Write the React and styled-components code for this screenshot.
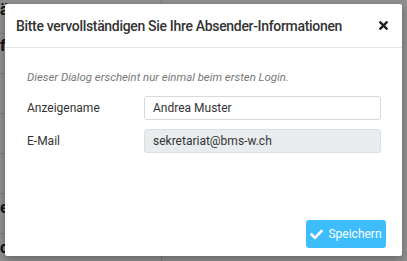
import styled, { createGlobalStyle } from "styled-components";
import { FaCheck, FaTimes } from "react-icons/fa";

const GlobalStyle = createGlobalStyle`
  html, body {
    margin: 0;
    padding: 0;
  }
  body {
    font-family: Roboto, "Liberation Sans", sans-serif;
    color: #333;
    overflow: hidden;
  }
`;

const Page = styled.div`
  position: relative;
  width: 407px;
  height: 261px;
  display: grid;
  grid-template-columns: 162px 1fr;
  background: #fff;
  overflow: hidden;
`;

const Sidebar = styled.div`
  border-right: 1px solid #ddd;
  display: flex;
  flex-direction: column;
`;

const SideRow = styled.div`
  height: ${(p) => p.$h || 40}px;
  flex-shrink: 0;
  border-bottom: 1px solid #e4e4e4;
  font-size: 16px;
  font-weight: 700;
  color: #222;
  padding-top: ${(p) => p.$pad || 0}px;
  box-sizing: border-box;
`;

const Backdrop = styled.div`
  position: absolute;
  inset: 0;
  background: rgba(0, 0, 0, 0.44);
  display: flex;
  align-items: flex-start;
  padding: 4px 5px;
`;

const Dialog = styled.div`
  width: 397px;
  height: 252px;
  background: #fff;
  border-radius: 2px;
  display: flex;
  flex-direction: column;
  box-shadow: 0 3px 9px rgba(0, 0, 0, 0.3);
`;

const Header = styled.div`
  height: 43px;
  border-bottom: 1px solid #e5e5e5;
  display: flex;
  align-items: center;
  justify-content: space-between;
  padding: 0 12px 0 11px;
  flex-shrink: 0;
`;

const Title = styled.h5`
  margin: 0;
  font-size: 14px;
  font-weight: 500;
  letter-spacing: -0.32px;
  color: #333;
  white-space: nowrap;
`;

const Close = styled.button`
  border: 0;
  background: none;
  padding: 0;
  color: #222;
  display: flex;
  align-items: center;
`;

const Body = styled.div`
  flex: 1;
  padding: 22px 21px 0 21px;
  display: flex;
  flex-direction: column;
`;

const Hint = styled.p`
  margin: 0 0 12px 1px;
  font-size: 11.4px;
  font-style: italic;
  color: #777;
`;

const Row = styled.div`
  display: grid;
  grid-template-columns: 118px 1fr;
  align-items: center;
  margin-bottom: 9px;
`;

const Label = styled.label`
  font-size: 12px;
  color: #333;
  padding-left: 1px;
`;

const Input = styled.input`
  height: 24px;
  box-sizing: border-box;
  border: 1px solid ${(p) => (p.disabled ? "#dcdfe2" : "#d6d8da")};
  border-radius: 3px;
  padding: 0 8px;
  font-family: Roboto, "Liberation Sans", sans-serif;
  font-size: 12px;
  color: #333;
  background: ${(p) => (p.disabled ? "#e9ecef" : "#fff")};
  outline: none;
  -webkit-text-fill-color: #333;
  opacity: 1;
`;

const Footer = styled.div`
  display: flex;
  justify-content: flex-end;
  padding: 0 16px 8px;
`;

const SaveButton = styled.button`
  width: 80px;
  height: 28px;
  border: 0;
  border-radius: 3px;
  background: #3dbdfb;
  color: #fff;
  font-family: Roboto, "Liberation Sans", sans-serif;
  font-size: 12px;
  display: flex;
  align-items: center;
  justify-content: center;
  gap: 5px;
  padding: 0;
`;

export default function App() {
  return (
    <>
      <GlobalStyle />
      <Page>
        <Sidebar>
          <SideRow $h={34}>ä</SideRow>
          <SideRow $pad={2}>f</SideRow>
          <SideRow />
          <SideRow />
          <SideRow />
          <SideRow $pad={4}>e</SideRow>
          <SideRow $pad={4}>c</SideRow>
        </Sidebar>
        <div />
        <Backdrop>
          <Dialog>
            <Header>
              <Title>Bitte vervollständigen Sie Ihre Absender-Informationen</Title>
              <Close aria-label="Schliessen">
                <FaTimes size={13} />
              </Close>
            </Header>
            <Body>
              <Hint>Dieser Dialog erscheint nur einmal beim ersten Login.</Hint>
              <Row>
                <Label>Anzeigename</Label>
                <Input defaultValue="Andrea Muster" />
              </Row>
              <Row>
                <Label>E-Mail</Label>
                <Input disabled defaultValue="sekretariat@bms-w.ch" />
              </Row>
            </Body>
            <Footer>
              <SaveButton>
                <FaCheck size={13} />
                Speichern
              </SaveButton>
            </Footer>
          </Dialog>
        </Backdrop>
      </Page>
    </>
  );
}
